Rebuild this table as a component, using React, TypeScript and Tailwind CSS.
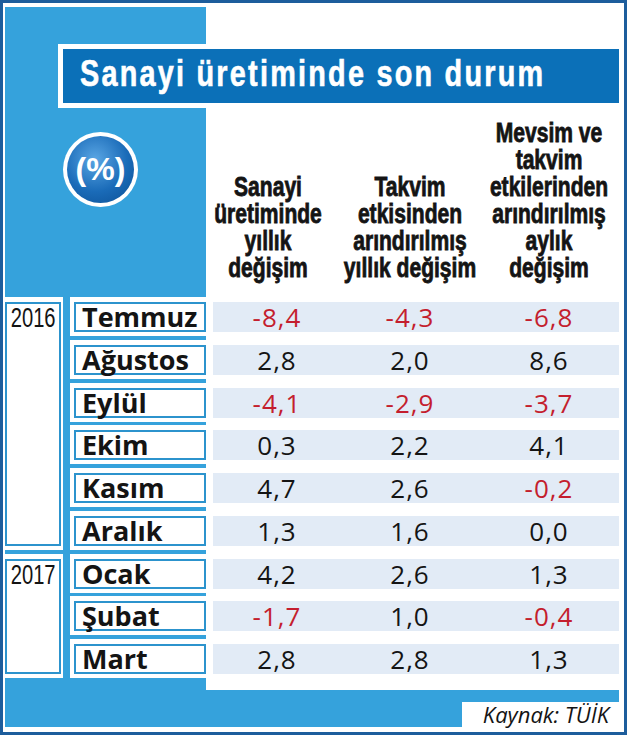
import React from 'react';

const rows = [
  { month: 'Temmuz', values: ['-8,4', '-4,3', '-6,8'] },
  { month: 'Ağustos', values: ['2,8', '2,0', '8,6'] },
  { month: 'Eylül', values: ['-4,1', '-2,9', '-3,7'] },
  { month: 'Ekim', values: ['0,3', '2,2', '4,1'] },
  { month: 'Kasım', values: ['4,7', '2,6', '-0,2'] },
  { month: 'Aralık', values: ['1,3', '1,6', '0,0'] },
  { month: 'Ocak', values: ['4,2', '2,6', '1,3'] },
  { month: 'Şubat', values: ['-1,7', '1,0', '-0,4'] },
  { month: 'Mart', values: ['2,8', '2,8', '1,3'] },
];

const headers = [
  ['Sanayi', 'üretiminde', 'yıllık', 'değişim'],
  ['Takvim', 'etkisinden', 'arındırılmış', 'yıllık değişim'],
  ['Mevsim ve', 'takvim', 'etkilerinden', 'arındırılmış', 'aylık', 'değişim'],
];

// no condensed face installed, so Liberation Sans is squeezed with scale-x
const arial = "font-['Liberation_Sans',Arial,sans-serif]";
const humanist = "font-['Open_Sans','Noto_Sans',sans-serif]";

const YearBox: React.FC<{ year: string; className: string }> = ({ year, className }) => (
  <div className={`${className} col-start-1 bg-white pt-[5px] pb-[4px] pr-[2px]`}>
    <div className="h-full border-2 border-[#2c93cd] flex justify-center">
      <span className={`${arial} inline-block scale-x-[0.72] text-[28px] leading-[28px] text-[#141414]`}>{year}</span>
    </div>
  </div>
);

const App: React.FC = () => {
  return (
    <div className="w-[627px] h-[735px] border-[3px] border-[#1d5d9c] bg-white pl-[2px] pt-[4px] pr-[5px] pb-[5px]">
      <div className="flex flex-col w-[614px] h-[720px]">
        {/* top: title, icon, column headers */}
        <div className="h-[290px] flex flex-col bg-[linear-gradient(to_right,#35a2dc_201px,#ffffff_201px)]">
          <div className="mt-[37px] ml-[53px] bg-white pl-[5px] py-[5px]">
            <div className="h-[54px] bg-[#0b70b8] pl-[17px] flex items-center">
              <span
                className={`${arial} inline-block origin-left scale-x-[0.8] text-white font-bold text-[36px] tracking-[2.8px] leading-none whitespace-nowrap -mt-[5px] [-webkit-text-stroke:0.6px_#ffffff]`}
              >
                Sanayi üretiminde son durum
              </span>
            </div>
          </div>
          <div className="flex flex-1">
            <div className="w-[201px] pl-[58px] pt-[24px]">
              <div className="w-[75px] h-[75px] rounded-full bg-white p-[4px]">
                <div className="w-full h-full rounded-full bg-[radial-gradient(circle_at_42%_35%,#5aa6e4_0%,#1a6bb8_55%,#0b4e93_100%)] flex items-center justify-center">
                  <span className={`${arial} font-bold text-white text-[32px] leading-none -mt-[2px]`}>(%)</span>
                </div>
              </div>
            </div>
            <div className="grid grid-cols-[124px_160px_118px] items-end pb-[15px]">
              {headers.map((lines, i) => (
                <div
                  key={i}
                  className={`${arial} flex flex-col items-center font-bold text-[27px] leading-[27px] text-[#141414] whitespace-nowrap scale-x-[0.78] [-webkit-text-stroke:0.8px_#141414]`}
                >
                  {lines.map((l) => (
                    <span key={l}>{l}</span>
                  ))}
                </div>
              ))}
            </div>
          </div>
        </div>

        {/* rows */}
        <div className="flex h-[393px]">
          <div className="w-[201px] bg-[#35a2dc]">
            <div className="grid grid-cols-[58px_136px] gap-x-[7px] grid-rows-[repeat(9,39px)] gap-y-[3.75px]">
              <YearBox year="2016" className="row-start-1 row-span-6" />
              <YearBox year="2017" className="row-start-7 row-span-3" />
              {rows.map((r, i) => (
                <div key={r.month} className="col-start-2 bg-white pt-[5px] pb-[4px] pl-[4px]" style={{ gridRowStart: i + 1 }}>
                  <div className="h-[30px] border-2 border-[#2c93cd] pl-[6px] flex items-center">
                    <span className={`${humanist} font-bold text-[27px] leading-[26px] text-[#141414]`}>{r.month}</span>
                  </div>
                </div>
              ))}
            </div>
          </div>
          <div className="flex-1 grid grid-rows-[repeat(9,39px)] gap-y-[3.75px] content-start">
            {rows.map((r) => (
              <div key={r.month} className="pt-[5px] pb-[4px] pl-[7px]">
                <div className="h-[30px] bg-[#e2ebf6] grid grid-cols-[128px_138px_140px] items-center text-center">
                  {r.values.map((v, j) => (
                    <span
                      key={j}
                      className={`${humanist} text-[26px] tracking-[1px] leading-[30px] ${v.startsWith('-') ? 'text-[#c41e2e]' : 'text-[#141414]'}`}
                    >
                      {v}
                    </span>
                  ))}
                </div>
              </div>
            ))}
          </div>
        </div>

        {/* bottom strip with source */}
        <div className="flex-1 bg-[#35a2dc] flex justify-end items-end">
          <div className="w-[157px] h-[25px] bg-white text-right pr-[10px]">
            <span className={`${humanist} italic text-[22px] leading-[25px] text-[#141414]`}>Kaynak: TÜİK</span>
          </div>
        </div>
      </div>
    </div>
  );
};

export default App;
